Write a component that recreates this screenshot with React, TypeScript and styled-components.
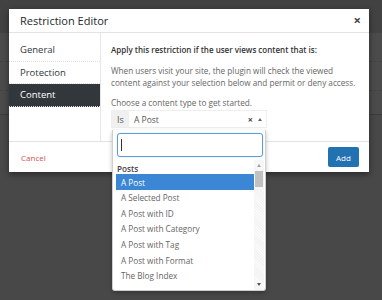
import styled, { createGlobalStyle } from 'styled-components';

const GlobalStyle = createGlobalStyle`
  html, body {
    margin: 0;
    padding: 0;
    background: #484848;
  }
  * {
    box-sizing: border-box;
  }
`;

const Page = styled.div`
  position: relative;
  width: 382px;
  height: 300px;
  overflow: hidden;
  background: #484848;
  font-family: "Open Sans", "Noto Sans", sans-serif;
`;

const BackdropTop = styled.div`
  height: 33px;
  background: #424242;
`;

const BackdropRow = styled.div<{ last?: boolean }>`
  height: ${p => (p.last ? 24 : 29)}px;
  background: #4b4b4b;
  border-bottom: 1px ${p => (p.last ? 'solid #3c3c3c' : 'dashed #424242')};
`;

const Modal = styled.div`
  position: absolute;
  left: 9px;
  top: 9px;
  width: 360px;
  height: 163px;
  background: #fff;
  box-shadow: 0 2px 6px rgba(0, 0, 0, 0.45);
  display: flex;
  flex-direction: column;
`;

const Header = styled.div`
  height: 24px;
  display: flex;
  align-items: center;
  justify-content: space-between;
  padding: 0 8px 0 11px;
  border-bottom: 1px solid #e2e2e2;
`;

const Title = styled.h2`
  margin: 0;
  font-size: 11px;
  font-weight: 400;
  color: #23282d;
`;

const Close = styled.span`
  font-size: 13px;
  font-weight: 700;
  color: #444;
  line-height: 1;
`;

const Body = styled.div`
  display: flex;
  height: 108px;
`;

const Sidebar = styled.ul`
  list-style: none;
  margin: 0;
  padding: 6px 0 0;
  width: 92px;
  border-right: 1px solid #e5e5e5;
`;

const Tab = styled.li<{ active?: boolean }>`
  height: 22.5px;
  display: flex;
  align-items: center;
  padding-left: 11px;
  font-size: 9.5px;
  color: ${p => (p.active ? '#fff' : '#32373c')};
  background: ${p => (p.active ? '#32373c' : 'transparent')};
  border-bottom: 1px dotted #e0e0e0;
`;

const Panel = styled.div`
  position: relative;
  flex: 1;
  padding: 11px 8px 0 10px;
  color: #666;
  font-size: 8.2px;
`;

const Lead = styled.p`
  margin: 0 0 9px;
  font-weight: 600;
  color: #333;
  font-size: 8px;
  line-height: 12px;
`;

const Text = styled.p`
  margin: 0 0 8px;
  line-height: 12px;
  white-space: nowrap;
`;

const Hint = styled.p`
  margin: 0 0 2px;
  line-height: 11px;
`;

const SelectBox = styled.div`
  width: 156px;
  height: 18px;
  display: flex;
  align-items: center;
  border: 1px solid #eee;
  background: #fff;
`;

const Prefix = styled.span`
  width: 17px;
  align-self: stretch;
  display: flex;
  align-items: center;
  justify-content: center;
  background: #f0f0f0;
  color: #555;
  font-size: 9px;
`;

const Value = styled.span`
  flex: 1;
  padding-left: 5px;
  font-size: 8.5px;
  color: #555;
`;

const Clear = styled.span`
  font-size: 9px;
  font-weight: 700;
  color: #444;
  margin-right: 5px;
  line-height: 1;
`;

const Caret = styled.span`
  width: 0;
  height: 0;
  border-left: 2.5px solid transparent;
  border-right: 2.5px solid transparent;
  border-bottom: 3px solid #666;
  margin-right: 4px;
`;

const Footer = styled.div`
  flex: 1;
  display: flex;
  align-items: center;
  justify-content: space-between;
  padding: 0 10px 0 12px;
  border-top: 1px solid #e2e2e2;
`;

const Cancel = styled.span`
  color: #cf5450;
  font-size: 8px;
`;

const AddButton = styled.button`
  width: 31px;
  height: 20px;
  border: none;
  border-radius: 2px;
  background: #2271b1;
  color: #fff;
  font-family: inherit;
  font-size: 8px;
  padding: 0;
`;

const Dropdown = styled.div`
  position: absolute;
  left: 112px;
  top: 130px;
  width: 154px;
  height: 161px;
  background: #fff;
  border: 1px solid #cfcfcf;
  border-top: none;
  border-radius: 0 0 3px 3px;
  box-shadow: 0 2px 4px rgba(0, 0, 0, 0.25);
  display: flex;
  flex-direction: column;
  overflow: hidden;
  font-size: 8.2px;
`;

const Search = styled.div`
  height: 24px;
  margin: 3px 2px 3px 4px;
  border: 1px solid #5b9dd9;
  border-radius: 3px;
  box-shadow: 0 0 1px rgba(30, 140, 190, 0.6);
  display: flex;
  align-items: center;
  padding-left: 3px;
`;

const TextCaret = styled.span`
  width: 1px;
  height: 12px;
  background: #333;
`;

const Results = styled.div`
  flex: 1;
  display: flex;
  min-height: 0;
`;

const Options = styled.ul`
  list-style: none;
  margin: 0;
  padding: 2px 0 0 3px;
  flex: 1;
  overflow: hidden;
`;

const Group = styled.li<{ gap?: number }>`
  height: 12px;
  margin-top: ${p => p.gap ?? 0}px;
  display: flex;
  align-items: center;
  padding-left: 1px;
  font-weight: 600;
  color: #444;
`;

const Option = styled.li<{ active?: boolean }>`
  height: ${p => (p.active ? 16 : 15.6)}px;
  display: flex;
  align-items: center;
  padding-left: 5px;
  color: ${p => (p.active ? '#fff' : '#666')};
  background: ${p => (p.active ? '#3b87d6' : 'transparent')};
`;

const Scrollbar = styled.div`
  width: 10px;
  margin-right: 1px;
  display: flex;
  flex-direction: column;
  align-items: center;
  background: repeating-linear-gradient(45deg, #f3f3f3 0 1px, #fafafa 1px 2px);
`;

const Arrow = styled.span<{ down?: boolean }>`
  width: 0;
  height: 0;
  margin: 4px 0;
  border-left: 2.5px solid transparent;
  border-right: 2.5px solid transparent;
  ${p => (p.down ? 'border-top: 3px solid #555;' : 'border-bottom: 3px solid #a3a3a3;')}
`;

const Thumb = styled.span`
  width: 8px;
  height: 16px;
  background: #c1c1c1;
`;

const Spacer = styled.span`
  flex: 1;
`;

const tabs = ['General', 'Protection', 'Content'];

const posts = [
  'A Post',
  'A Selected Post',
  'A Post with ID',
  'A Post with Category',
  'A Post with Tag',
  'A Post with Format',
  'The Blog Index',
];

export default function App() {
  return (
    <Page>
      <GlobalStyle />
      <BackdropTop />
      <BackdropRow />
      <BackdropRow />
      <BackdropRow last />

      <Modal>
        <Header>
          <Title>Restriction Editor</Title>
          <Close>×</Close>
        </Header>
        <Body>
          <Sidebar>
            {tabs.map(t => (
              <Tab key={t} active={t === 'Content'}>{t}</Tab>
            ))}
          </Sidebar>
          <Panel>
            <Lead>Apply this restriction if the user views content that is:</Lead>
            <Text>
              When users visit your site, the plugin will check the viewed
              <br />
              content against your selection below and permit or deny access.
            </Text>
            <Hint>Choose a content type to get started.</Hint>
            <SelectBox>
              <Prefix>Is</Prefix>
              <Value>A Post</Value>
              <Clear>×</Clear>
              <Caret />
            </SelectBox>
          </Panel>
        </Body>
        <Footer>
          <Cancel>Cancel</Cancel>
          <AddButton>Add</AddButton>
        </Footer>
      </Modal>

      <Dropdown>
        <Search>
          <TextCaret />
        </Search>
        <Results>
          <Options>
            <Group>Posts</Group>
            {posts.map(p => (
              <Option key={p} active={p === 'A Post'}>{p}</Option>
            ))}
            <Group gap={3}>Pages</Group>
          </Options>
          <Scrollbar>
            <Arrow />
            <Thumb />
            <Spacer />
            <Arrow down />
          </Scrollbar>
        </Results>
      </Dropdown>
    </Page>
  );
}
